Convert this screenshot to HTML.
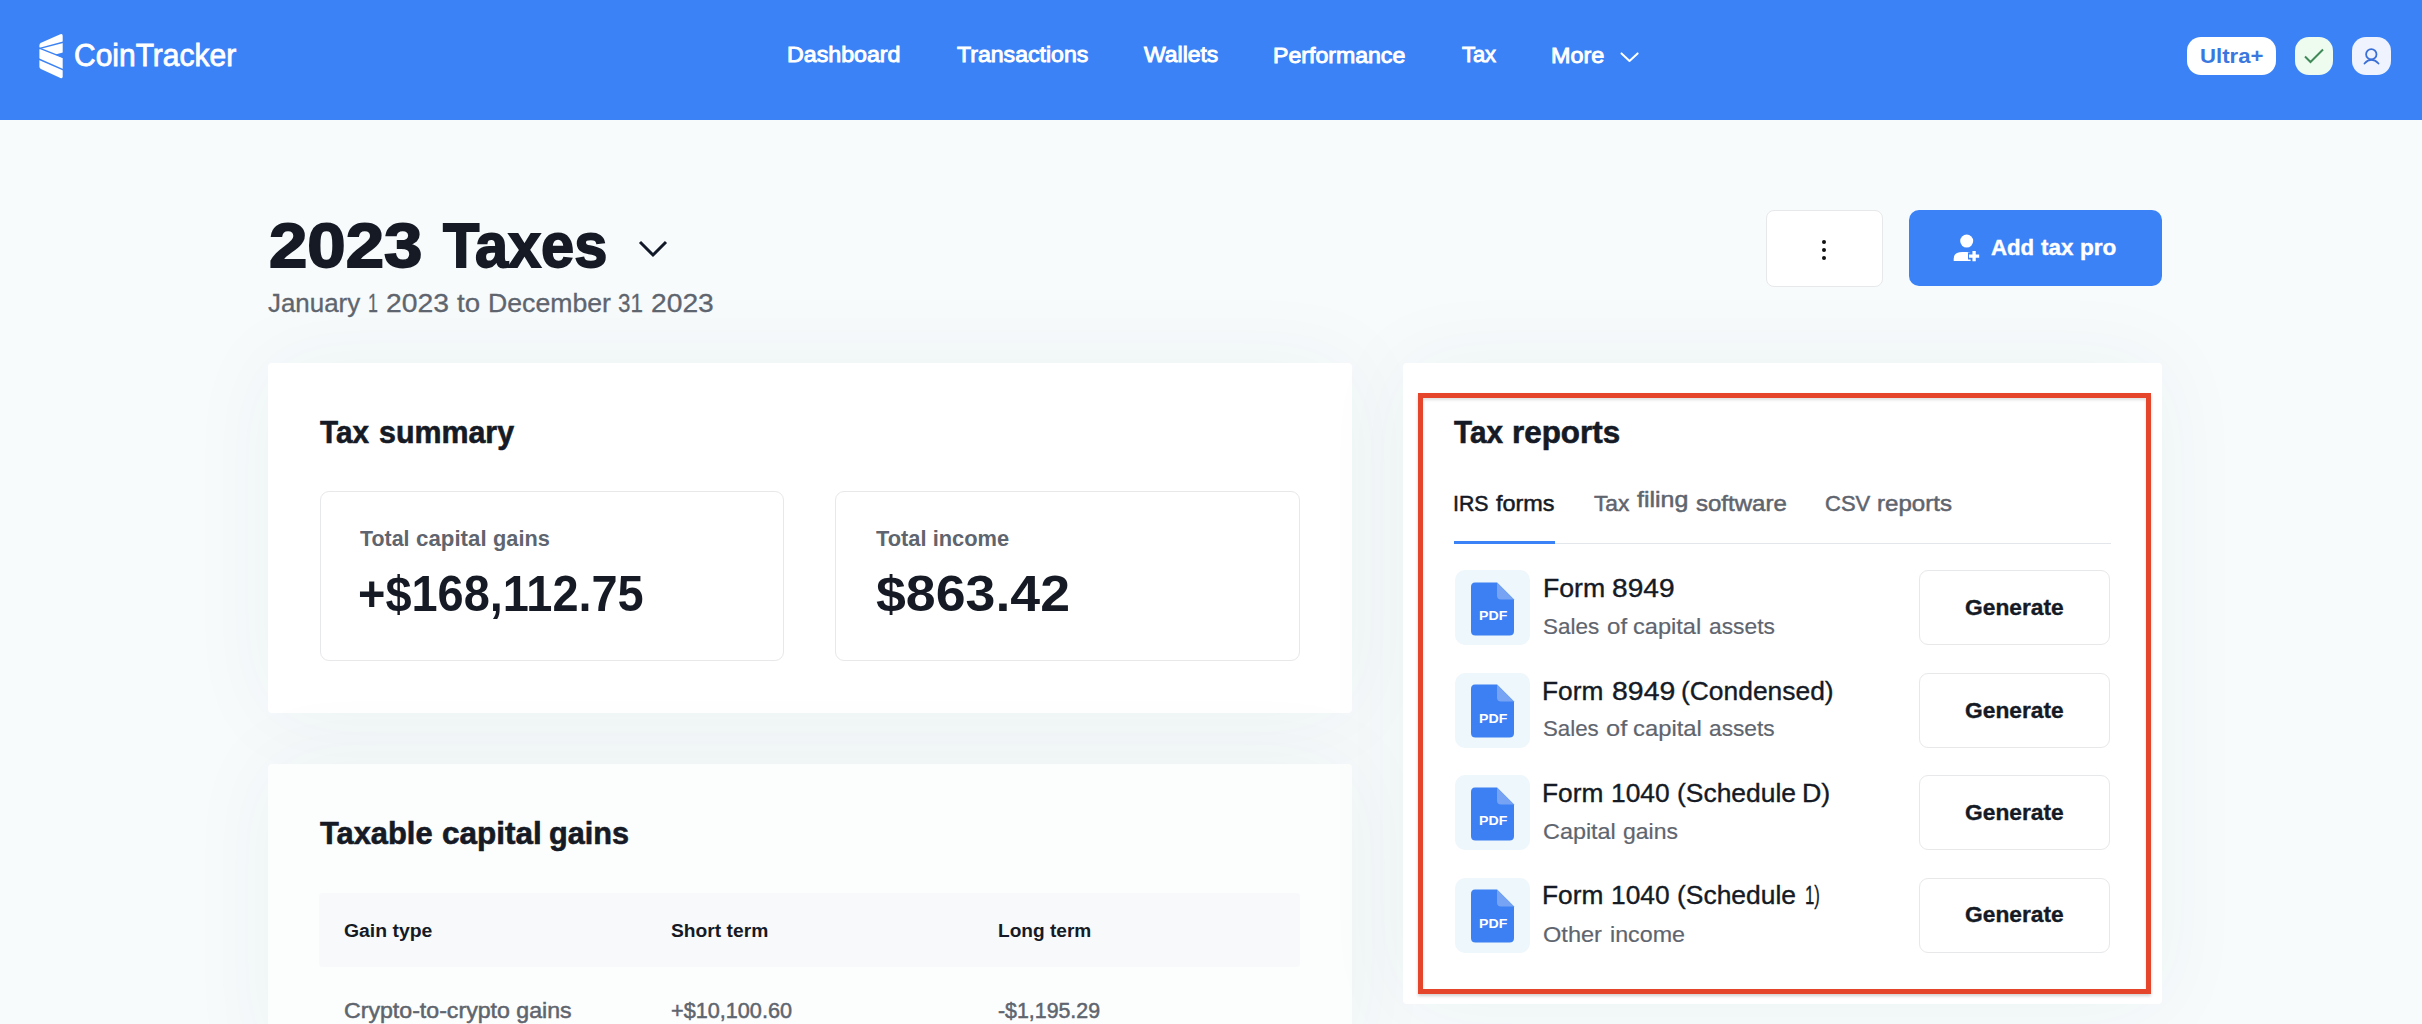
<!DOCTYPE html>
<html><head><meta charset="utf-8">
<style>
html,body{margin:0;padding:0;}
body{width:2422px;height:1024px;overflow:hidden;position:relative;background:#f7fbfc;font-family:"Liberation Sans",sans-serif;}
.t{position:absolute;white-space:nowrap;line-height:1;transform-origin:0 0;}
.b{position:absolute;box-sizing:border-box;}
</style></head><body>
<div class="b" style="left:0;top:0;width:2422px;height:120px;background:#3b82f6;"></div>
<!-- logo icon -->
<svg class="b" style="left:0;top:0" width="80" height="90" viewBox="0 0 80 90">
<path d="M39.4 45.4 Q39.4 43.6 41.1 42.8 L60.3 34.3 Q62.7 33.3 62.7 35.9 L62.7 76.2 Q62.7 78.9 60.4 77.9 L40.9 69.0 Q39.4 68.3 39.4 66.7 Z" fill="#fff"/>
<path d="M38 48.9 L64 41.95" stroke="#3b82f6" stroke-width="1.4"/>
<path d="M38 47.7 L64 57.8" stroke="#3b82f6" stroke-width="1.4"/>
<path d="M38 58.7 L64 70.1" stroke="#3b82f6" stroke-width="1.5"/>
<path d="M55.3 54.5 L63 52.4 L63 57.9 Z" fill="#3b82f6"/>
</svg>
<!-- chevron more -->
<svg class="b" style="left:1618px;top:49px" width="23" height="16" viewBox="0 0 23 16"><path d="M3.5 4.4 L11.5 12 L19.6 4.4" stroke="#fff" stroke-width="2" fill="none" stroke-linecap="round" stroke-linejoin="round"/></svg>
<!-- header right -->
<div class="b" style="left:2187px;top:37px;width:89px;height:38px;border-radius:14px;background:#fff;"></div>
<div class="b" style="left:2295px;top:37px;width:38px;height:38px;border-radius:14px;background:#eefbef;"></div>
<svg class="b" style="left:2295px;top:37px" width="38" height="38" viewBox="0 0 38 38"><path d="M10 19.5 L15.5 25 L28 12.5" stroke="#3f8a57" stroke-width="2" fill="none"/></svg>
<div class="b" style="left:2352px;top:37px;width:39px;height:38px;border-radius:14px;background:#eef3fd;"></div>
<svg class="b" style="left:2352px;top:37px" width="39" height="38" viewBox="0 0 39 38"><circle cx="19.3" cy="17.3" r="5.2" stroke="#3b6fd8" stroke-width="1.8" fill="none"/><path d="M12.5 26.5 Q19.3 19 26.5 26.5" stroke="#3b6fd8" stroke-width="1.8" fill="none" stroke-linecap="round"/></svg>

<!-- title chevron -->
<svg class="b" style="left:636px;top:238px" width="34" height="22" viewBox="0 0 34 22"><path d="M4 4 L17 17 L30 4" stroke="#111827" stroke-width="3" fill="none"/></svg>

<!-- dots button -->
<div class="b" style="left:1766px;top:210px;width:117px;height:77px;border-radius:8px;background:#fff;border:1.5px solid #e7e8ea;"></div>
<div class="b" style="left:1822.2px;top:240.4px;width:4px;height:4px;border-radius:50%;background:#111;"></div>
<div class="b" style="left:1822.2px;top:247.9px;width:4px;height:4px;border-radius:50%;background:#111;"></div>
<div class="b" style="left:1822.2px;top:255.8px;width:4px;height:4px;border-radius:50%;background:#111;"></div>
<!-- add tax pro -->
<div class="b" style="left:1909px;top:210px;width:253px;height:76px;border-radius:10px;background:#3b82f6;"></div>
<svg class="b" style="left:1950px;top:230px" width="34" height="34" viewBox="0 0 34 34">
  <circle cx="16.7" cy="11.1" r="6.5" fill="#fff"/>
  <path d="M3.7 31.1 V28.7 Q3.7 21.9 12.5 21.9 H16.5 Q20.5 21.9 22.5 24 V31.1 Z" fill="#fff"/>
  <path d="M24.1 20 V32.2 M18 26.1 H30.2" stroke="#3b82f6" stroke-width="7"/>
  <path d="M24.1 21 V31.2 M19 26.1 H29.2" stroke="#fff" stroke-width="3.3"/>
</svg>

<!-- tax summary card -->
<div class="b" style="left:268px;top:363px;width:1084px;height:350px;border-radius:4px;background:#fff;box-shadow:0 0 90px rgba(30,50,80,0.05);"></div>
<div class="b" style="left:320px;top:491px;width:464px;height:170px;border-radius:9px;border:1.5px solid #e7e8ea;"></div>
<div class="b" style="left:835px;top:491px;width:465px;height:170px;border-radius:9px;border:1.5px solid #e7e8ea;"></div>

<!-- taxable capital gains card -->
<div class="b" style="left:268px;top:764px;width:1084px;height:300px;border-radius:4px;background:#fcfdfd;box-shadow:0 0 90px rgba(30,50,80,0.05);"></div>
<div class="b" style="left:319px;top:893px;width:981px;height:74px;border-radius:4px;background:#f7f9fa;"></div>

<!-- tax reports card -->
<div class="b" style="left:1403px;top:363px;width:759px;height:641px;border-radius:4px;background:#fff;box-shadow:0 0 90px rgba(30,50,80,0.05);"></div>
<div class="b" style="left:1454px;top:542.5px;width:657px;height:1px;background:#e3e6ea;"></div>
<div class="b" style="left:1454px;top:541px;width:101px;height:2.6px;background:#3b82f6;"></div>
<div class="b" style="left:1455px;top:570.2px;width:75px;height:75px;border-radius:10px;background:#eef7fb;"></div>
<svg class="b" style="left:1470px;top:580.7px" width="45" height="56" viewBox="0 0 45 56"><path d="M5 1.5 H27 L44 18.5 V50 Q44 54.5 39.5 54.5 H5.5 Q1 54.5 1 50 V6 Q1 1.5 5 1.5 Z" fill="#3d80f3"/><path d="M27 1.5 L44 18.5 H31 Q27 18.5 27 14.5 Z" fill="#77a3f4"/></svg>
<div class="b" style="left:1919px;top:570.2px;width:191px;height:75px;border-radius:9px;background:#fff;border:1.5px solid #e7e8ea;"></div>
<div class="b" style="left:1455px;top:672.7px;width:75px;height:75px;border-radius:10px;background:#eef7fb;"></div>
<svg class="b" style="left:1470px;top:683.2px" width="45" height="56" viewBox="0 0 45 56"><path d="M5 1.5 H27 L44 18.5 V50 Q44 54.5 39.5 54.5 H5.5 Q1 54.5 1 50 V6 Q1 1.5 5 1.5 Z" fill="#3d80f3"/><path d="M27 1.5 L44 18.5 H31 Q27 18.5 27 14.5 Z" fill="#77a3f4"/></svg>
<div class="b" style="left:1919px;top:672.7px;width:191px;height:75px;border-radius:9px;background:#fff;border:1.5px solid #e7e8ea;"></div>
<div class="b" style="left:1455px;top:775.1px;width:75px;height:75px;border-radius:10px;background:#eef7fb;"></div>
<svg class="b" style="left:1470px;top:785.6px" width="45" height="56" viewBox="0 0 45 56"><path d="M5 1.5 H27 L44 18.5 V50 Q44 54.5 39.5 54.5 H5.5 Q1 54.5 1 50 V6 Q1 1.5 5 1.5 Z" fill="#3d80f3"/><path d="M27 1.5 L44 18.5 H31 Q27 18.5 27 14.5 Z" fill="#77a3f4"/></svg>
<div class="b" style="left:1919px;top:775.1px;width:191px;height:75px;border-radius:9px;background:#fff;border:1.5px solid #e7e8ea;"></div>
<div class="b" style="left:1455px;top:877.6px;width:75px;height:75px;border-radius:10px;background:#eef7fb;"></div>
<svg class="b" style="left:1470px;top:888.1px" width="45" height="56" viewBox="0 0 45 56"><path d="M5 1.5 H27 L44 18.5 V50 Q44 54.5 39.5 54.5 H5.5 Q1 54.5 1 50 V6 Q1 1.5 5 1.5 Z" fill="#3d80f3"/><path d="M27 1.5 L44 18.5 H31 Q27 18.5 27 14.5 Z" fill="#77a3f4"/></svg>
<div class="b" style="left:1919px;top:877.6px;width:191px;height:75px;border-radius:9px;background:#fff;border:1.5px solid #e7e8ea;"></div>
<div class="b" style="left:1418px;top:393px;width:733px;height:601px;border:5px solid #e4452b;box-shadow:0 2px 3px rgba(0,0,0,0.18), inset 0 2px 3px rgba(0,0,0,0.12);"></div>
<div class="t" id="logo" style="left:74.00px;top:40.79px;font-size:30.96px;font-weight:400;color:#ffffff;transform:scaleX(0.9687);-webkit-text-stroke:0.80px #ffffff">CoinTracker</div>
<div class="t" id="n1" style="left:787.40px;top:43.54px;font-size:21.80px;font-weight:400;color:#ffffff;transform:scaleX(1.0643);-webkit-text-stroke:0.90px #ffffff">Dashboard</div>
<div class="t" id="n2" style="left:957.20px;top:43.54px;font-size:21.80px;font-weight:400;color:#ffffff;transform:scaleX(1.0592);-webkit-text-stroke:0.90px #ffffff">Transactions</div>
<div class="t" id="n3" style="left:1144.20px;top:43.54px;font-size:21.80px;font-weight:400;color:#ffffff;transform:scaleX(1.0517);-webkit-text-stroke:0.90px #ffffff">Wallets</div>
<div class="t" id="n4" style="left:1273.00px;top:44.54px;font-size:21.80px;font-weight:400;color:#ffffff;transform:scaleX(1.0601);-webkit-text-stroke:0.90px #ffffff">Performance</div>
<div class="t" id="n5" style="left:1462.00px;top:43.54px;font-size:21.80px;font-weight:400;color:#ffffff;transform:scaleX(1.0035);-webkit-text-stroke:0.90px #ffffff">Tax</div>
<div class="t" id="n6" style="left:1551.20px;top:44.54px;font-size:21.80px;font-weight:400;color:#ffffff;transform:scaleX(1.0718);-webkit-text-stroke:0.90px #ffffff">More</div>
<div class="t" id="ultra" style="left:2199.60px;top:44.56px;font-size:21.08px;font-weight:700;color:#3a78e0;transform:scaleX(1.0504)">Ultra+</div>
<div class="t" id="title_a" style="left:269.00px;top:214.49px;font-size:63.08px;font-weight:700;color:#151a25;transform:scaleX(1.0936);-webkit-text-stroke:1.80px #151a25">2023</div>
<div class="t" id="title_b" style="left:442.90px;top:214.49px;font-size:63.08px;font-weight:700;color:#151a25;transform:scaleX(0.9430);-webkit-text-stroke:1.80px #151a25">Taxes</div>
<div class="t" id="sub_0" style="left:267.90px;top:292.46px;font-size:24.85px;font-weight:400;color:#5f656e;transform:scaleX(1.0433);-webkit-text-stroke:0.30px #5f656e">January</div>
<div class="t" id="sub_1" style="left:367.80px;top:292.46px;font-size:24.85px;font-weight:400;color:#5f656e;transform:scaleX(0.7198);-webkit-text-stroke:0.30px #5f656e">1</div>
<div class="t" id="sub_2" style="left:386.20px;top:292.46px;font-size:24.85px;font-weight:400;color:#5f656e;transform:scaleX(1.1398);-webkit-text-stroke:0.30px #5f656e">2023</div>
<div class="t" id="sub_3" style="left:457.00px;top:292.46px;font-size:24.85px;font-weight:400;color:#5f656e;transform:scaleX(1.1119);-webkit-text-stroke:0.30px #5f656e">to</div>
<div class="t" id="sub_4" style="left:487.60px;top:292.46px;font-size:24.85px;font-weight:400;color:#5f656e;transform:scaleX(1.0726);-webkit-text-stroke:0.30px #5f656e">December</div>
<div class="t" id="sub_5" style="left:617.80px;top:292.46px;font-size:24.85px;font-weight:400;color:#5f656e;transform:scaleX(0.9012);-webkit-text-stroke:0.30px #5f656e">31</div>
<div class="t" id="sub_6" style="left:651.00px;top:292.46px;font-size:24.85px;font-weight:400;color:#5f656e;transform:scaleX(1.1361);-webkit-text-stroke:0.30px #5f656e">2023</div>
<div class="t" id="addpro_a" style="left:1990.80px;top:237.46px;font-size:21.66px;font-weight:700;color:#ffffff;transform:scaleX(1.0256);-webkit-text-stroke:0.40px #ffffff">Add</div>
<div class="t" id="addpro_b" style="left:2040.80px;top:237.46px;font-size:21.66px;font-weight:700;color:#ffffff;transform:scaleX(1.0322);-webkit-text-stroke:0.40px #ffffff">tax</div>
<div class="t" id="addpro_c" style="left:2080.40px;top:237.46px;font-size:21.66px;font-weight:700;color:#ffffff;transform:scaleX(1.0435);-webkit-text-stroke:0.40px #ffffff">pro</div>
<div class="t" id="ts_a" style="left:320.00px;top:417.03px;font-size:31.03px;font-weight:700;color:#151a25;transform:scaleX(0.9572);-webkit-text-stroke:0.60px #151a25">Tax</div>
<div class="t" id="ts_b" style="left:378.50px;top:417.03px;font-size:31.03px;font-weight:700;color:#151a25;transform:scaleX(0.9795);-webkit-text-stroke:0.60px #151a25">summary</div>
<div class="t" id="tcg_a" style="left:359.80px;top:528.91px;font-size:21.37px;font-weight:700;color:#5f656e;transform:scaleX(1.0004)">Total</div>
<div class="t" id="tcg_b" style="left:415.80px;top:528.91px;font-size:21.37px;font-weight:700;color:#5f656e;transform:scaleX(1.0432)">capital</div>
<div class="t" id="tcg_c" style="left:493.00px;top:528.91px;font-size:21.37px;font-weight:700;color:#5f656e;transform:scaleX(1.0185)">gains</div>
<div class="t" id="tcgv" style="left:357.80px;top:569.37px;font-size:50.58px;font-weight:700;color:#151a25;transform:scaleX(0.9276)">+$168,112.75</div>
<div class="t" id="ti" style="left:875.80px;top:528.14px;font-size:21.80px;font-weight:700;color:#5f656e;transform:scaleX(1.0031)">Total income</div>
<div class="t" id="tiv" style="left:876.20px;top:568.94px;font-size:50.15px;font-weight:700;color:#151a25;transform:scaleX(1.0704)">$863.42</div>
<div class="t" id="tcgh_a" style="left:320.20px;top:818.99px;font-size:30.96px;font-weight:700;color:#151a25;transform:scaleX(0.9965);-webkit-text-stroke:0.60px #151a25">Taxable</div>
<div class="t" id="tcgh_b" style="left:442.10px;top:818.99px;font-size:30.96px;font-weight:700;color:#151a25;transform:scaleX(1.0169);-webkit-text-stroke:0.60px #151a25">capital</div>
<div class="t" id="tcgh_c" style="left:549.20px;top:818.99px;font-size:30.96px;font-weight:700;color:#151a25;transform:scaleX(0.9900);-webkit-text-stroke:0.60px #151a25">gains</div>
<div class="t" id="gt" style="left:344.40px;top:920.96px;font-size:19.19px;font-weight:700;color:#151a25;transform:scaleX(1.0106)">Gain type</div>
<div class="t" id="st" style="left:671.00px;top:920.96px;font-size:19.19px;font-weight:700;color:#151a25;transform:scaleX(1.0023)">Short term</div>
<div class="t" id="lt" style="left:997.80px;top:920.96px;font-size:19.19px;font-weight:700;color:#151a25;transform:scaleX(0.9947)">Long term</div>
<div class="t" id="r1" style="left:344.40px;top:1000.09px;font-size:22.09px;font-weight:400;color:#5f656e;transform:scaleX(1.0482);-webkit-text-stroke:0.50px #5f656e">Crypto-to-crypto gains</div>
<div class="t" id="r2" style="left:671.00px;top:1000.09px;font-size:22.09px;font-weight:400;color:#5f656e;transform:scaleX(0.9804);-webkit-text-stroke:0.50px #5f656e">+$10,100.60</div>
<div class="t" id="r3" style="left:997.80px;top:1000.09px;font-size:22.09px;font-weight:400;color:#5f656e;transform:scaleX(0.9665);-webkit-text-stroke:0.50px #5f656e">-$1,195.29</div>
<div class="t" id="tr_a" style="left:1454.30px;top:417.24px;font-size:31.25px;font-weight:700;color:#151a25;transform:scaleX(0.9495);-webkit-text-stroke:0.60px #151a25">Tax</div>
<div class="t" id="tr_b" style="left:1511.90px;top:417.24px;font-size:31.25px;font-weight:700;color:#151a25;transform:scaleX(1.0039);-webkit-text-stroke:0.60px #151a25">reports</div>
<div class="t" id="tab_0" style="left:1453.40px;top:492.84px;font-size:21.80px;font-weight:400;color:#151a25;transform:scaleX(0.9772);-webkit-text-stroke:0.50px #151a25">IRS</div>
<div class="t" id="tab_1" style="left:1496.10px;top:492.84px;font-size:21.80px;font-weight:400;color:#151a25;transform:scaleX(1.0741);-webkit-text-stroke:0.50px #151a25">forms</div>
<div class="t" id="tab_2" style="left:1594.40px;top:492.84px;font-size:21.80px;font-weight:400;color:#5f656e;transform:scaleX(1.0417);-webkit-text-stroke:0.50px #5f656e">Tax</div>
<div class="t" id="tab_3" style="left:1637.40px;top:488.84px;font-size:21.80px;font-weight:400;color:#5f656e;transform:scaleX(1.1457);-webkit-text-stroke:0.50px #5f656e">filing</div>
<div class="t" id="tab_4" style="left:1695.90px;top:492.84px;font-size:21.80px;font-weight:400;color:#5f656e;transform:scaleX(1.1014);-webkit-text-stroke:0.50px #5f656e">software</div>
<div class="t" id="tab_5" style="left:1824.60px;top:492.84px;font-size:21.80px;font-weight:400;color:#5f656e;transform:scaleX(1.0094);-webkit-text-stroke:0.50px #5f656e">CSV</div>
<div class="t" id="tab_6" style="left:1877.40px;top:492.84px;font-size:21.80px;font-weight:400;color:#5f656e;transform:scaleX(1.1046);-webkit-text-stroke:0.50px #5f656e">reports</div>
<div class="t" id="f0_0" style="left:1542.50px;top:577.36px;font-size:24.85px;font-weight:400;color:#151a25;transform:scaleX(1.0730);-webkit-text-stroke:0.35px #151a25">Form</div>
<div class="t" id="f0_1" style="left:1612.00px;top:577.36px;font-size:24.85px;font-weight:400;color:#151a25;transform:scaleX(1.1323);-webkit-text-stroke:0.35px #151a25">8949</div>
<div class="t" id="d0_0" style="left:1543.10px;top:615.94px;font-size:21.80px;font-weight:400;color:#5f656e;transform:scaleX(1.0302);-webkit-text-stroke:0.20px #5f656e">Sales</div>
<div class="t" id="d0_1" style="left:1606.80px;top:615.94px;font-size:21.80px;font-weight:400;color:#5f656e;transform:scaleX(1.1037);-webkit-text-stroke:0.20px #5f656e">of</div>
<div class="t" id="d0_2" style="left:1632.70px;top:615.94px;font-size:21.80px;font-weight:400;color:#5f656e;transform:scaleX(1.0820);-webkit-text-stroke:0.20px #5f656e">capital</div>
<div class="t" id="d0_3" style="left:1708.90px;top:615.94px;font-size:21.80px;font-weight:400;color:#5f656e;transform:scaleX(1.0460);-webkit-text-stroke:0.20px #5f656e">assets</div>
<div class="t" id="g0" style="left:1965.40px;top:596.54px;font-size:21.80px;font-weight:700;color:#151a25;transform:scaleX(1.0453);-webkit-text-stroke:0.35px #151a25">Generate</div>
<div class="t" id="p0" style="left:1479.20px;top:610.25px;font-size:12.94px;font-weight:700;color:#ffffff;transform:scaleX(1.0950)">PDF</div>
<div class="t" id="f1_0" style="left:1542.20px;top:679.86px;font-size:24.85px;font-weight:400;color:#151a25;transform:scaleX(1.0583);-webkit-text-stroke:0.35px #151a25">Form</div>
<div class="t" id="f1_1" style="left:1611.80px;top:679.86px;font-size:24.85px;font-weight:400;color:#151a25;transform:scaleX(1.1448);-webkit-text-stroke:0.35px #151a25">8949</div>
<div class="t" id="f1_2" style="left:1681.40px;top:679.86px;font-size:24.85px;font-weight:400;color:#151a25;transform:scaleX(1.0629);-webkit-text-stroke:0.35px #151a25">(Condensed)</div>
<div class="t" id="d1_0" style="left:1543.40px;top:718.44px;font-size:21.80px;font-weight:400;color:#5f656e;transform:scaleX(1.0228);-webkit-text-stroke:0.20px #5f656e">Sales</div>
<div class="t" id="d1_1" style="left:1605.90px;top:718.44px;font-size:21.80px;font-weight:400;color:#5f656e;transform:scaleX(1.1659);-webkit-text-stroke:0.20px #5f656e">of</div>
<div class="t" id="d1_2" style="left:1633.40px;top:718.44px;font-size:21.80px;font-weight:400;color:#5f656e;transform:scaleX(1.0920);-webkit-text-stroke:0.20px #5f656e">capital</div>
<div class="t" id="d1_3" style="left:1708.90px;top:718.44px;font-size:21.80px;font-weight:400;color:#5f656e;transform:scaleX(1.0428);-webkit-text-stroke:0.20px #5f656e">assets</div>
<div class="t" id="g1" style="left:1965.40px;top:699.54px;font-size:21.80px;font-weight:700;color:#151a25;transform:scaleX(1.0453);-webkit-text-stroke:0.35px #151a25">Generate</div>
<div class="t" id="p1" style="left:1479.20px;top:713.25px;font-size:12.94px;font-weight:700;color:#ffffff;transform:scaleX(1.0950)">PDF</div>
<div class="t" id="f2_0" style="left:1542.20px;top:781.66px;font-size:24.85px;font-weight:400;color:#151a25;transform:scaleX(1.0583);-webkit-text-stroke:0.35px #151a25">Form</div>
<div class="t" id="f2_1" style="left:1610.80px;top:781.66px;font-size:24.85px;font-weight:400;color:#151a25;transform:scaleX(1.0606);-webkit-text-stroke:0.35px #151a25">1040</div>
<div class="t" id="f2_2" style="left:1676.90px;top:781.66px;font-size:24.85px;font-weight:400;color:#151a25;transform:scaleX(1.0637);-webkit-text-stroke:0.35px #151a25">(Schedule</div>
<div class="t" id="f2_3" style="left:1801.60px;top:781.66px;font-size:24.85px;font-weight:400;color:#151a25;transform:scaleX(1.0793);-webkit-text-stroke:0.35px #151a25">D)</div>
<div class="t" id="d2_0" style="left:1543.40px;top:821.24px;font-size:21.80px;font-weight:400;color:#5f656e;transform:scaleX(1.0728);-webkit-text-stroke:0.20px #5f656e">Capital</div>
<div class="t" id="d2_1" style="left:1623.00px;top:821.24px;font-size:21.80px;font-weight:400;color:#5f656e;transform:scaleX(1.0551);-webkit-text-stroke:0.20px #5f656e">gains</div>
<div class="t" id="g2" style="left:1965.40px;top:802.34px;font-size:21.80px;font-weight:700;color:#151a25;transform:scaleX(1.0453);-webkit-text-stroke:0.35px #151a25">Generate</div>
<div class="t" id="p2" style="left:1479.20px;top:815.05px;font-size:12.94px;font-weight:700;color:#ffffff;transform:scaleX(1.0950)">PDF</div>
<div class="t" id="f3_0" style="left:1542.20px;top:884.16px;font-size:24.85px;font-weight:400;color:#151a25;transform:scaleX(1.0583);-webkit-text-stroke:0.35px #151a25">Form</div>
<div class="t" id="f3_1" style="left:1610.80px;top:884.16px;font-size:24.85px;font-weight:400;color:#151a25;transform:scaleX(1.0606);-webkit-text-stroke:0.35px #151a25">1040</div>
<div class="t" id="f3_2" style="left:1676.90px;top:884.16px;font-size:24.85px;font-weight:400;color:#151a25;transform:scaleX(1.0637);-webkit-text-stroke:0.35px #151a25">(Schedule</div>
<div class="t" id="f3_3" style="left:1805.10px;top:884.16px;font-size:24.85px;font-weight:400;color:#151a25;transform:scaleX(0.6754);-webkit-text-stroke:0.35px #151a25">1)</div>
<div class="t" id="d3_0" style="left:1543.40px;top:923.74px;font-size:21.80px;font-weight:400;color:#5f656e;transform:scaleX(1.0818);-webkit-text-stroke:0.20px #5f656e">Other</div>
<div class="t" id="d3_1" style="left:1609.50px;top:923.74px;font-size:21.80px;font-weight:400;color:#5f656e;transform:scaleX(1.0678);-webkit-text-stroke:0.20px #5f656e">income</div>
<div class="t" id="g3" style="left:1965.40px;top:904.34px;font-size:21.80px;font-weight:700;color:#151a25;transform:scaleX(1.0453);-webkit-text-stroke:0.35px #151a25">Generate</div>
<div class="t" id="p3" style="left:1479.20px;top:918.05px;font-size:12.94px;font-weight:700;color:#ffffff;transform:scaleX(1.0950)">PDF</div>
</body></html>
